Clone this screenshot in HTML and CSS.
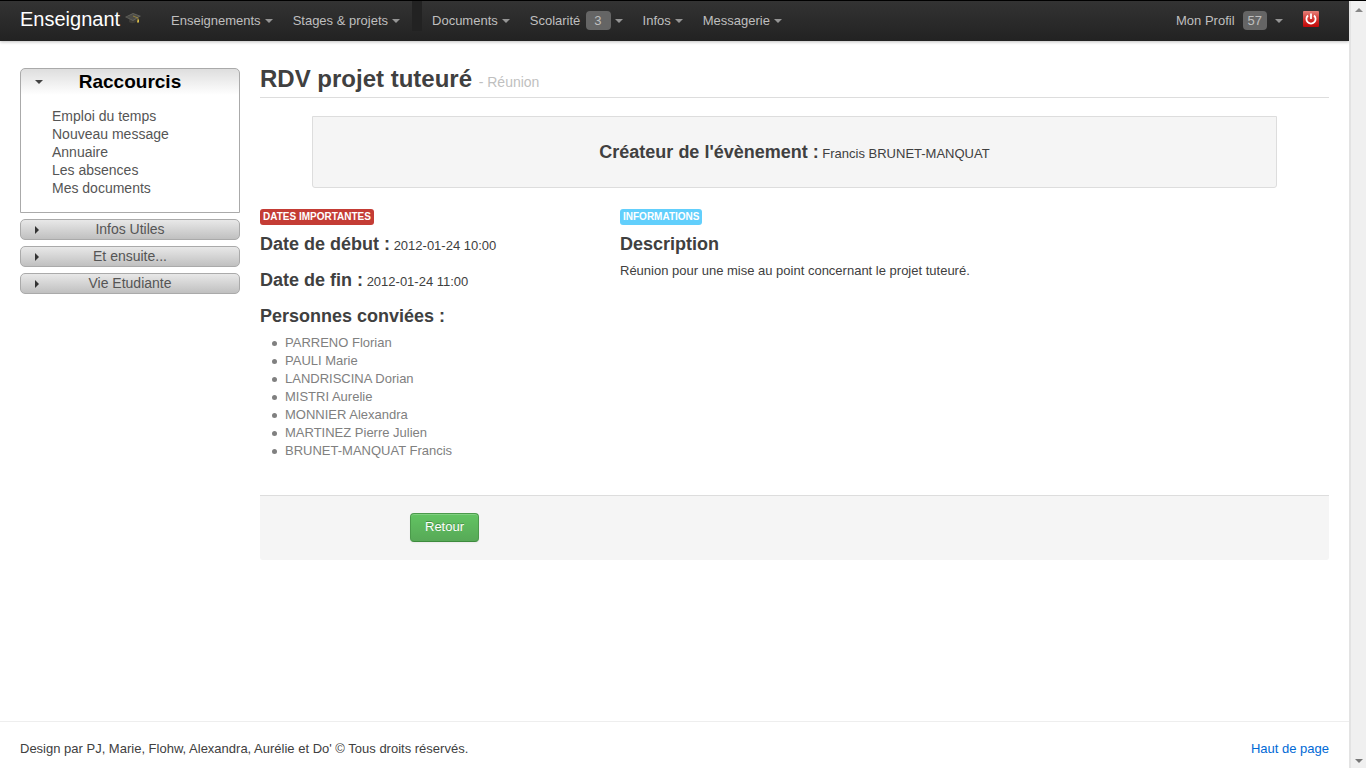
FILE: index.html
```html
<!DOCTYPE html>
<html lang="fr">
<head>
<meta charset="utf-8">
<title>RDV projet tuteuré</title>
<link rel="stylesheet" href="styles.css">
</head>
<body>
<div class="page" id="top">
  <header class="topbar">
    <a class="brand" href="#">Enseignant
      <svg class="cap" viewBox="0 0 16 16" width="16" height="16" aria-hidden="true">
        <path d="M4 8v4q4 3 8-1V7z" fill="#3c3b37"/>
        <path d="M0 7l8-4 8 3-8 5z" fill="#66665f"/>
        <path d="M1 7l7-3 6 2-6 4z" fill="#4c4c48"/>
        <path d="M8 6l5 2v2" fill="none" stroke="#b59a35" stroke-width=".7"/>
        <path d="M12.500 9.500h1.500v3h-2z" fill="#d9bd4a"/>
      </svg>
    </a>
    <nav class="nav">
      <a href="#">Enseignements<span class="caret"></span></a>
      <a href="#">Stages &amp; projets<span class="caret"></span></a>
      <span class="divider"></span>
      <a href="#">Documents<span class="caret"></span></a>
      <a href="#">Scolarité<span class="count">3</span><span class="caret"></span></a>
      <a href="#">Infos<span class="caret"></span></a>
      <a href="#">Messagerie<span class="caret"></span></a>
    </nav>
    <nav class="nav account">
      <a class="profile" href="#">Mon Profil<span class="count">57</span><span class="caret"></span></a>
      <a href="#" aria-label="Déconnexion">
        <svg class="power" viewBox="0 0 16 16" width="16" height="16" aria-hidden="true">
          <defs>
            <linearGradient id="red" x1="0" y1="0" x2="0" y2="1">
              <stop offset="0" stop-color="#e58078"/>
              <stop offset=".6" stop-color="#d02a26"/>
              <stop offset="1" stop-color="#c00808"/>
            </linearGradient>
          </defs>
          <rect width="16" height="16" rx="1" fill="url(#red)"/>
          <path d="M5 4.500a4.600 4.600 0 1 0 6 0" fill="none" stroke="#fff" stroke-width="1.800"/>
          <path d="M8 2.500v5.500" stroke="#fff" stroke-width="1.800"/>
        </svg>
      </a>
    </nav>
  </header>

  <div class="layout">
    <aside class="sidebar">
      <section class="panel">
        <h2 class="panel-title"><span class="arrow-down"></span>Raccourcis</h2>
        <ul class="links">
          <li><a href="#">Emploi du temps</a></li>
          <li><a href="#">Nouveau message</a></li>
          <li><a href="#">Annuaire</a></li>
          <li><a href="#">Les absences</a></li>
          <li><a href="#">Mes documents</a></li>
        </ul>
      </section>
      <button class="fold" type="button"><span class="arrow-right"></span>Infos Utiles</button>
      <button class="fold" type="button"><span class="arrow-right"></span>Et ensuite...</button>
      <button class="fold" type="button"><span class="arrow-right"></span>Vie Etudiante</button>
    </aside>

    <main class="content">
      <h1 class="title">RDV projet tuteuré <small>- Réunion</small></h1>
      <div class="creator"><strong class="heading">Créateur de l'évènement :</strong> Francis BRUNET-MANQUAT</div>
      <div class="details">
        <section class="dates">
          <span class="label important">Dates importantes</span>
          <p class="row"><strong class="heading">Date de début :</strong> 2012-01-24 10:00</p>
          <p class="row"><strong class="heading">Date de fin :</strong> 2012-01-24 11:00</p>
          <h3 class="heading">Personnes conviées :</h3>
          <ul class="people">
            <li>PARRENO Florian</li>
            <li>PAULI Marie</li>
            <li>LANDRISCINA Dorian</li>
            <li>MISTRI Aurelie</li>
            <li>MONNIER Alexandra</li>
            <li>MARTINEZ Pierre Julien</li>
            <li>BRUNET-MANQUAT Francis</li>
          </ul>
        </section>
        <section class="info">
          <span class="label notice">Informations</span>
          <h3 class="heading">Description</h3>
          <p class="text">Réunion pour une mise au point concernant le projet tuteuré.</p>
        </section>
      </div>
      <div class="actions"><button class="back" type="button">Retour</button></div>
    </main>
  </div>

  <footer class="footer">
    <span>Design par PJ, Marie, Flohw, Alexandra, Aurélie et Do' © Tous droits réservés.</span>
    <a href="#top">Haut de page</a>
  </footer>
</div>
<div class="scrollbar" aria-hidden="true"><span class="scroll-up"></span><span class="scroll-down"></span></div>
</body>
</html>
```

FILE: styles.css
```css
* { box-sizing: border-box; }

body {
  display: flex;
  min-height: 100vh;
  margin: 0;
  border-top: 1px solid #000;
  background: #fff;
  color: #404040;
  font: 13px/18px "Liberation Sans", Arial, sans-serif;
}

a { color: inherit; text-decoration: none; }
h1, h2, h3, p, ul { margin: 0; padding: 0; }
button { font-family: inherit; cursor: pointer; }

.page { display: flex; flex: 1; flex-direction: column; min-width: 0; }

.topbar {
  display: flex;
  height: 40px;
  padding: 0 20px;
  background: linear-gradient(#333, #222);
  box-shadow: 0 1px 3px rgba(0, 0, 0, 0.25);
  color: #bfbfbf;
}

.brand {
  display: flex;
  gap: 5px;
  width: 141px;
  color: #fff;
  font-size: 20px;
  line-height: 36px;
}
.cap { margin-top: 9px; }

.nav { display: flex; }
.nav a { display: flex; align-items: center; height: 40px; padding: 0 10px; }

.caret {
  margin-left: 4px;
  border: 4px solid transparent;
  border-top-color: #959595;
  border-bottom: 0;
}
.count {
  height: 19px;
  margin: 0 0 1px 6px;
  padding: 0 9px 0 8px;
  border-radius: 4px;
  background: #656565;
  line-height: 20px;
}
.profile .count { margin-left: 8px; padding: 0 5px; }
.profile .caret { margin-left: 8px; }
.divider { width: 10px; height: 30px; margin-left: 2px; background: #222; }
.account { margin-left: auto; }
.power { margin-bottom: 4px; }

.layout { display: flex; gap: 20px; padding: 20px 20px 0; }

.sidebar { display: flex; flex: none; flex-direction: column; gap: 6px; width: 220px; margin-top: 7px; }

.panel {
  border: 1px solid #aaa;
  border-radius: 5px 5px 0 0;
  background: linear-gradient(#dedede, #fff 26px);
}
.panel-title {
  display: flex;
  align-items: center;
  justify-content: center;
  position: relative;
  color: #000;
  font-size: 19px;
  line-height: 25px;
}
.arrow-down {
  position: absolute;
  left: 14px;
  border: 4px solid transparent;
  border-top-color: #444;
  border-bottom: 0;
}
.links { padding: 13px 31px 15px; list-style: none; color: #555; font-size: 14px; }

.fold {
  display: flex;
  align-items: center;
  justify-content: center;
  position: relative;
  height: 21px;
  padding: 0 0 2px;
  border: 1px solid #aaa;
  border-radius: 5px;
  background: linear-gradient(#e8e8e8, #c0c0c0);
  color: #555;
  font-size: 14px;
  line-height: 18px;
}
.arrow-right {
  position: absolute;
  top: 6px;
  left: 14px;
  border: 4px solid transparent;
  border-left-color: #333;
  border-right: 0;
}

.content { flex: 1; min-width: 0; }
.title { border-bottom: 1px solid #ddd; font-size: 24px; line-height: 36px; }
.title small { color: #bfbfbf; font-size: 14px; font-weight: normal; line-height: 18px; }

.creator {
  margin: 18px 52px 20px;
  padding: 17px;
  border: 1px solid #ddd;
  border-radius: 0 0 3px 3px;
  background: #f5f5f5;
  text-align: center;
}
.heading { font-size: 18px; font-weight: bold; line-height: 36px; }

.details { display: flex; gap: 20px; }
.dates { flex: none; width: 340px; }
.info { flex: 1; }

.label {
  display: block;
  width: fit-content;
  height: 16px;
  margin: 1px 0;
  padding: 0 3px;
  border-radius: 3px;
  color: #fff;
  font-size: 10px;
  font-weight: bold;
  line-height: 16px;
  text-transform: uppercase;
}
.important { background: #c43c35; }
.notice { background: #62cffc; }

.people { padding-left: 12px; color: #808080; list-style: none; }
.people li { display: flex; gap: 8px; align-items: center; }
.people li::before {
  width: 5px;
  height: 5px;
  border-radius: 50%;
  background: #808080;
  content: "";
}

.actions {
  margin-top: 35px;
  padding: 17px 20px 18px 150px;
  border-top: 1px solid #ddd;
  border-radius: 0 0 3px 3px;
  background: #f5f5f5;
}
.back {
  display: block;
  padding: 5px 14px 6px;
  border: 1px solid #4b9a4b;
  border-bottom-color: #3d8b3d;
  border-radius: 4px;
  background: linear-gradient(#62c462, #57a957);
  box-shadow: inset 0 1px 0 rgba(255, 255, 255, 0.2), 0 1px 2px rgba(0, 0, 0, 0.05);
  color: #fff;
  font-size: 13px;
  line-height: 16px;
  text-shadow: 0 -1px 0 rgba(0, 0, 0, 0.25);
}

.footer {
  display: flex;
  justify-content: space-between;
  margin-top: auto;
  padding: 18px 20px 10px;
  border-top: 1px solid #eee;
}
.footer a { color: #0069d6; }

.scrollbar {
  display: flex;
  flex: none;
  flex-direction: column;
  align-items: center;
  justify-content: space-between;
  width: 17px;
  padding: 7px 0 5px;
  border-left: 2px solid #e3e3e3;
  background: #f0f0f0;
}
.scroll-up, .scroll-down { border: 4px solid transparent; }
.scroll-up { border-top: 0; border-bottom-color: #888; }
.scroll-down { border-bottom: 0; border-top-color: #777; }
```
